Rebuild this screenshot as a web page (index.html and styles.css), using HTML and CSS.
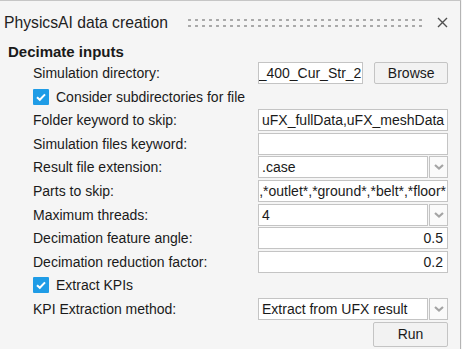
FILE: index.html
```html
<!DOCTYPE html>
<html lang="en">

<head>
    <meta charset="UTF-8">
    <title>PhysicsAI data creation</title>
    <link rel="stylesheet" href="styles.css">
</head>

<body>
    <div class="panel">
        <div class="header">
            <span class="title">PhysicsAI data creation</span>
            <span class="grip"></span>
            <svg class="close" width="11" height="11" viewBox="0 0 11 11">
                <path d="M1 1 L10 10 M10 1 L1 10" stroke="#505050" stroke-width="1.4" fill="none" />
            </svg>
        </div>

        <div class="section-title">Decimate inputs</div>

        <div class="form">
            <div class="label">Simulation directory:</div>
            <div class="pair">
                <div class="field clip short">_400_Cur_Str_2</div>
                <button class="btn browse">Browse</button>
            </div>

            <div class="check-row">
                <span class="check"><svg width="16" height="16" viewBox="0 0 16 16">
                        <path d="M4 8.2 L6.8 10.8 L12 5.4" stroke="#fff" stroke-width="2" fill="none" />
                    </svg></span>
                Consider subdirectories for file
            </div>

            <div class="label">Folder keyword to skip:</div>
            <div class="field">uFX_fullData,uFX_meshData</div>

            <div class="label">Simulation files keyword:</div>
            <div class="field"></div>

            <div class="label">Result file extension:</div>
            <div class="combo">
                <div class="field">.case</div>
                <div class="arrow"><svg width="10" height="6" viewBox="0 0 10 6">
                        <path d="M1 1 L5 4.5 L9 1" stroke="#a4a4a4" stroke-width="2.2" fill="none" />
                    </svg></div>
            </div>

            <div class="label">Parts to skip:</div>
            <div class="field clip">,*outlet*,*ground*,*belt*,*floor*</div>

            <div class="label">Maximum threads:</div>
            <div class="combo">
                <div class="field">4</div>
                <div class="arrow"><svg width="10" height="6" viewBox="0 0 10 6">
                        <path d="M1 1 L5 4.5 L9 1" stroke="#a4a4a4" stroke-width="2.2" fill="none" />
                    </svg></div>
            </div>

            <div class="label">Decimation feature angle:</div>
            <div class="field num">0.5</div>

            <div class="label">Decimation reduction factor:</div>
            <div class="field num">0.2</div>

            <div class="check-row">
                <span class="check"><svg width="16" height="16" viewBox="0 0 16 16">
                        <path d="M4 8.2 L6.8 10.8 L12 5.4" stroke="#fff" stroke-width="2" fill="none" />
                    </svg></span>
                Extract KPIs
            </div>

            <div class="label">KPI Extraction method:</div>
            <div class="combo">
                <div class="field">Extract from UFX result</div>
                <div class="arrow"><svg width="10" height="6" viewBox="0 0 10 6">
                        <path d="M1 1 L5 4.5 L9 1" stroke="#a4a4a4" stroke-width="2.2" fill="none" />
                    </svg></div>
            </div>

            <div class="label"></div>
            <div class="run-cell">
                <button class="btn run">Run</button>
            </div>
        </div>
    </div>
</body>

</html>
```

FILE: styles.css
```css
* {
    margin: 0;
    box-sizing: border-box;
    font-family: "Liberation Sans", Arial, sans-serif;
}

body {
    background-color: #f5f5f5;
    color: #1a1a1a;
    width: 462px;
    height: 349px;
    overflow: hidden;
}

.panel {
    width: 461px;
    height: 349px;
    border-top: 1px solid #c6c6c6;
    border-right: 1px solid #b4b4b4;
}

.header {
    display: flex;
    align-items: center;
    height: 40px;
    padding-left: 4px;
    padding-top: 3px;
}

.title {
    font-size: 15.7px;
    color: #222;
}

.grip {
    flex: 1;
    height: 10px;
    margin-left: 18px;
    margin-right: 15px;
    background-image: radial-gradient(circle, #a8a8a8 1.1px, transparent 1.5px);
    background-size: 7px 6px;
    background-position: 0 -1px;
}

.close {
    margin-right: 12px;
}

.section-title {
    font-size: 15px;
    font-weight: bold;
    padding-left: 8px;
    margin-top: 2px;
    height: 18px;
}

.form {
    display: grid;
    grid-template-columns: 225px 190px;
    grid-auto-rows: 22px;
    row-gap: 1.6px;
    padding-left: 33px;
    margin-top: 1px;
}

.label {
    font-size: 14px;
    display: flex;
    align-items: center;
}

.field {
    height: 22px;
    background-color: #fff;
    border: 1px solid #c4c4c4;
    font-size: 14px;
    padding: 0 3px;
    display: flex;
    align-items: center;
    white-space: nowrap;
    overflow: hidden;
}

.clip {
    justify-content: flex-end;
    padding: 0 1px;
}

.num {
    justify-content: flex-end;
    padding-right: 4px;
}

.pair {
    display: flex;
    gap: 11px;
}

.short {
    width: 106px;
}

.btn {
    font-size: 14px;
    color: #1a1a1a;
    background-color: #f2f2f2;
    border: 1px solid #c4c4c4;
    border-radius: 2px;
}

.browse {
    width: 74px;
    height: 22px;
}

.check-row {
    grid-column: 1 / 3;
    display: flex;
    align-items: center;
    gap: 7px;
    font-size: 14px;
}

.check {
    width: 16px;
    height: 16px;
    background-color: #1f9ce6;
    border-radius: 1px;
    display: flex;
}

.combo {
    display: flex;
    gap: 1px;
}

.combo .field {
    flex: 1;
}

.arrow {
    width: 19px;
    height: 22px;
    background-color: #fafafa;
    border: 1px solid #c4c4c4;
    display: flex;
    align-items: center;
    justify-content: center;
}

.run-cell {
    display: flex;
    justify-content: flex-end;
}

.run {
    width: 75px;
    height: 25px;
}
```
